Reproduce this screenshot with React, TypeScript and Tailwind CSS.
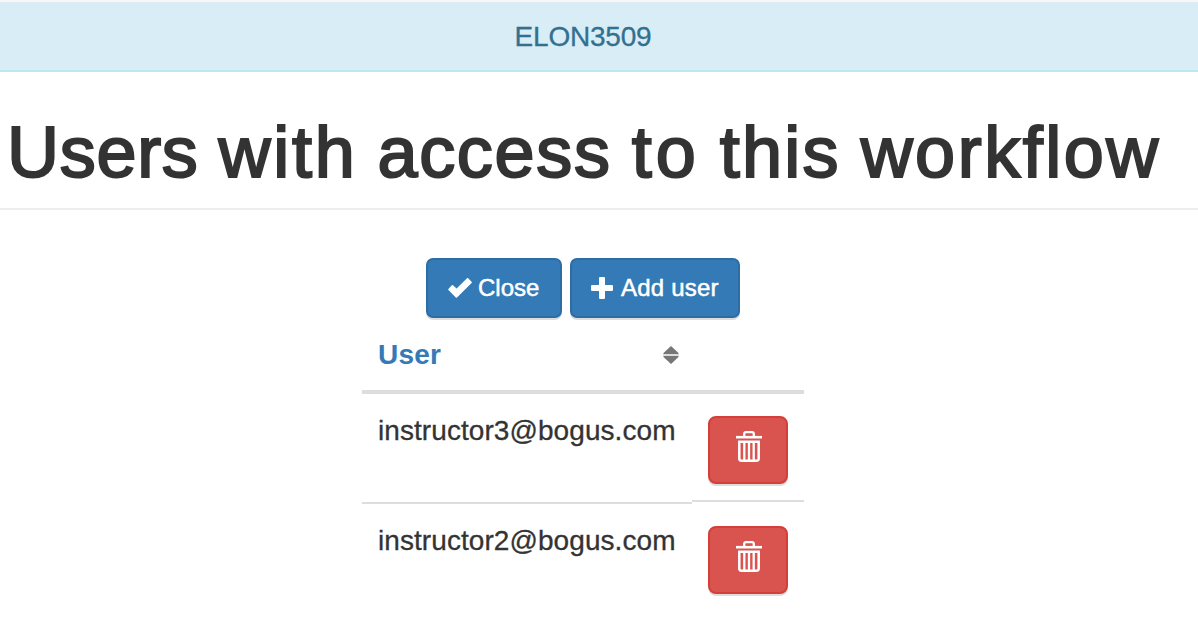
const OkIcon = () => (
  <svg width="24" height="20" viewBox="0 0 24 20" className="shrink-0">
    <path d="M.4 10.9 3.8 7.3q.6-.5 1.2 0L8.6 10.5 19 .2q.6-.6 1.2 0L23.6 3.8q.5.6 0 1.2L9 19.5q-.6.5-1.2 0L.4 12q-.5-.5 0-1.1Z" fill="currentColor" />
  </svg>
);

const PlusIcon = () => (
  <svg width="22" height="22" viewBox="0 0 22 22" className="shrink-0">
    <path d="M9 0h4q1 0 1 1v7h7q1 0 1 1v4q0 1-1 1h-7v7q0 1-1 1H9q-1 0-1-1v-7H1q-1 0-1-1V9q0-1 1-1h7V1q0-1 1-1Z" fill="currentColor" />
  </svg>
);

const SortIcon = () => (
  <svg width="16" height="18" viewBox="0 0 16 18">
    <path d="M0 8h16v2H0Z" fill="#ddd" />
    <path d="M8 0 15.5 7v1H.5V7ZM.5 10h15v1L8 18 .5 11Z" fill="#777" />
  </svg>
);

const TrashIcon = () => (
  <svg width="26" height="31" viewBox="0 0 26 31" fill="none" stroke="currentColor">
    <path d="M0 6.2h26" strokeWidth="2.6" />
    <path d="M8.2 6V3q0-1.8 1.8-1.8h6q1.8 0 1.8 1.8v3" strokeWidth="2.3" />
    <path d="M3.3 10.8v16.7q0 2.2 2.2 2.2h15q2.2 0 2.2-2.2V10.8Z" strokeWidth="2.5" />
    <path d="M8.3 11v19M13 11v19M17.7 11v19" strokeWidth="2.3" />
  </svg>
);

const users = ["instructor3@bogus.com", "instructor2@bogus.com"];

export default function App() {
  return (
    <div className="h-[644px] w-[1198px] overflow-hidden bg-white font-['Liberation_Sans',Arial,sans-serif] text-[28px] text-[#333]">
      <div className="flex h-[72px] items-center justify-center border-t-2 border-b-2 border-t-[#f7f7f7] border-b-[#bce8f1] bg-[#d9edf7] pt-0.5 pr-[32px] tracking-[-0.2px] text-[#31708f] [-webkit-text-stroke:0.3px_#31708f]">
        ELON3509
      </div>
      <h1 className="h-[138px] border-b-2 border-[#eee] pt-[41px] pl-[7px] text-[72px] leading-[79px] whitespace-nowrap [-webkit-text-stroke:2.1px_#333]">
        <span className="tracking-[0.7px]">Users</span>{" "}
        <span className="tracking-[2.7px]">with</span>{" "}
        <span className="tracking-[1.7px]">access</span>{" "}
        <span className="tracking-[4px]">to</span>{" "}
        <span className="tracking-[2.2px]">this</span>{" "}
        <span className="tracking-[2.5px]">workflow</span>
      </h1>
      <div className="mt-12 ml-[426px] flex gap-2 text-[24px] text-white [-webkit-text-stroke:0.5px_white]">
        <button className="flex h-[60px] w-[136px] items-center gap-1.5 rounded-[7px] border-2 border-[#2e6da4] bg-[#337ab7] pl-5 shadow-[0_2px_0_#ddd]"><OkIcon />Close</button>
        <button className="flex h-[60px] w-[170px] items-center gap-2 rounded-[7px] border-2 border-[#2e6da4] bg-[#337ab7] pl-[19px] shadow-[0_2px_0_#ddd]"><PlusIcon /><span className="tracking-[0.2px]">Add user</span></button>
      </div>
      <div className="ml-[362px] w-[442px]">
        <div className="flex h-[76px] items-center justify-between border-b-4 border-[#ddd] pt-0.5 pr-[125px] pl-4 font-bold tracking-[0.2px] text-[#337ab7]">User<SortIcon /></div>
        {users.map((u, i) => (
          <div key={u} className="flex h-[110px] items-start">
            <div className={i === 0 ? "h-[110px] w-[330px] border-b-2 border-[#ddd] pt-4 pl-4" : "h-[110px] w-[330px] pt-4 pl-4"}>
              <span className="tracking-[0.07px] [-webkit-text-stroke:0.3px_#333]">{u}</span>
            </div>
            <div className={i === 0 ? "h-[108px] w-28 border-b-2 border-[#ddd] pt-[22px] pl-4" : "h-[108px] w-28 pt-[22px] pl-4"}>
              <button className="flex h-[68px] w-20 justify-center rounded-lg border-2 border-[#d43f3a] bg-[#d9534f] pt-[13px] pl-0.5 text-white shadow-[0_2px_0_#ddd]"><TrashIcon /></button>
            </div>
          </div>
        ))}
      </div>
    </div>
  );
}
